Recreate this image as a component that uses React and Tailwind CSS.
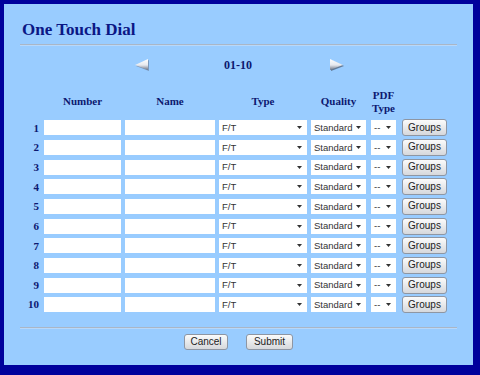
import React from 'react'

const rows = [1, 2, 3, 4, 5, 6, 7, 8, 9, 10]

function Arrow({ dir }) {
  return (
    <svg width="18" height="14" viewBox="0 0 18 14">
      <defs>
        <linearGradient id={'g' + dir} x1="0" y1="0" x2="0" y2="1">
          <stop offset="0" stopColor="#ffffff" />
          <stop offset="0.55" stopColor="#e6e9ef" />
          <stop offset="1" stopColor="#6c7383" />
        </linearGradient>
      </defs>
      {dir === 'left' ? (
        <>
          <polygon points="16,2 16,13 3,8" fill="#5b6378" opacity="0.5" />
          <polygon points="15,1 15,12 2,7" fill={'url(#g' + dir + ')'} />
        </>
      ) : (
        <>
          <polygon points="3,2 3,13 16,8" fill="#3c4352" opacity="0.6" />
          <polygon points="2,1 2,12 15,7" fill={'url(#g' + dir + ')'} />
        </>
      )}
    </svg>
  )
}

function FakeSelect({ value, width }) {
  return (
    <div className={`${width} h-[15px] bg-white flex items-center justify-between pl-[3px] pr-[5px] text-[9.5px] leading-none text-[#333] font-['Liberation_Sans',Arial,sans-serif]`}>
      <span>{value}</span>
      <svg width="5" height="3" viewBox="0 0 5 3" className="shrink-0">
        <polygon points="0,0 5,0 2.5,3" fill="#333" />
      </svg>
    </div>
  )
}

function GrayButton({ children, width, height }) {
  return (
    <button className={`${width} ${height} rounded-[3px] border border-[#8e96a3] bg-gradient-to-b from-[#fbfbfb] to-[#d6d8dc] text-[10px] leading-none text-[#222] font-['Liberation_Sans',Arial,sans-serif] flex items-center justify-center`}>
      {children}
    </button>
  )
}

export default function App() {
  const head = "font-['Liberation_Serif',serif] font-bold text-[11px] leading-[13px] text-[#0c1870] text-center"
  return (
    <div className="w-[480px] h-[375px] bg-[#00009c] pt-[4px] pl-[4px] pr-[7px] pb-[10px]">
      <div className="h-full bg-[#99ccff] pt-[16px] px-[16px]">
        <h1 className="pl-[2px] text-[17px] leading-[20px] font-bold text-[#0b1785] font-['Liberation_Serif',serif]">
          One Touch Dial
        </h1>
        <div className="mt-[4px] h-[2px] border-t border-[#aab6c6] border-b border-b-[#b8d8fa]" />

        {/* navegación */}
        <div className="mt-[9px] h-[20px] flex items-center">
          <div className="ml-[113px] w-[18px] flex">
            <Arrow dir="left" />
          </div>
          <div className="ml-[73px] w-[29px] font-['Liberation_Serif',serif] font-bold text-[12px] text-[#0c1870]">
            01-10
          </div>
          <div className="ml-[75px] w-[18px] flex">
            <Arrow dir="right" />
          </div>
        </div>

        {/* encabezados */}
        <div className="mt-[13px] h-[27px] flex items-center">
          <div className="w-[19px]" />
          <div className={`ml-[5px] w-[77px] ${head}`}>Number</div>
          <div className={`ml-[4px] w-[90px] ${head}`}>Name</div>
          <div className={`ml-[4px] w-[88px] ${head}`}>Type</div>
          <div className={`ml-[4px] w-[55px] ${head}`}>Quality</div>
          <div className={`ml-[5px] w-[25px] ${head}`}>
            PDF
            <br />
            Type
          </div>
        </div>

        {/* filas */}
        <div className="mt-[3px] flex flex-col">
          {rows.map((n) => (
            <div key={n} className="h-[19.67px] flex items-center">
              <div className="w-[19px] text-right font-['Liberation_Serif',serif] font-bold text-[11px] text-[#0c1870]">
                {n}
              </div>
              <input type="text" className="ml-[5px] w-[77px] h-[15px] bg-white outline-none" />
              <input type="text" className="ml-[4px] w-[90px] h-[15px] bg-white outline-none" />
              <div className="ml-[4px]">
                <FakeSelect value="F/T" width="w-[88px]" />
              </div>
              <div className="ml-[4px]">
                <FakeSelect value="Standard" width="w-[55px]" />
              </div>
              <div className="ml-[5px]">
                <FakeSelect value="--" width="w-[25px]" />
              </div>
              <div className="ml-[6px]">
                <GrayButton width="w-[45px]" height="h-[17px]">Groups</GrayButton>
              </div>
            </div>
          ))}
        </div>

        <div className="mt-[12px] h-[2px] border-t border-[#aab6c6] border-b border-b-[#b8d8fa]" />

        <div className="mt-[5px] flex justify-center gap-[18px]">
          <GrayButton width="w-[44px]" height="h-[16px]">Cancel</GrayButton>
          <GrayButton width="w-[47px]" height="h-[16px]">Submit</GrayButton>
        </div>
      </div>
    </div>
  )
}
